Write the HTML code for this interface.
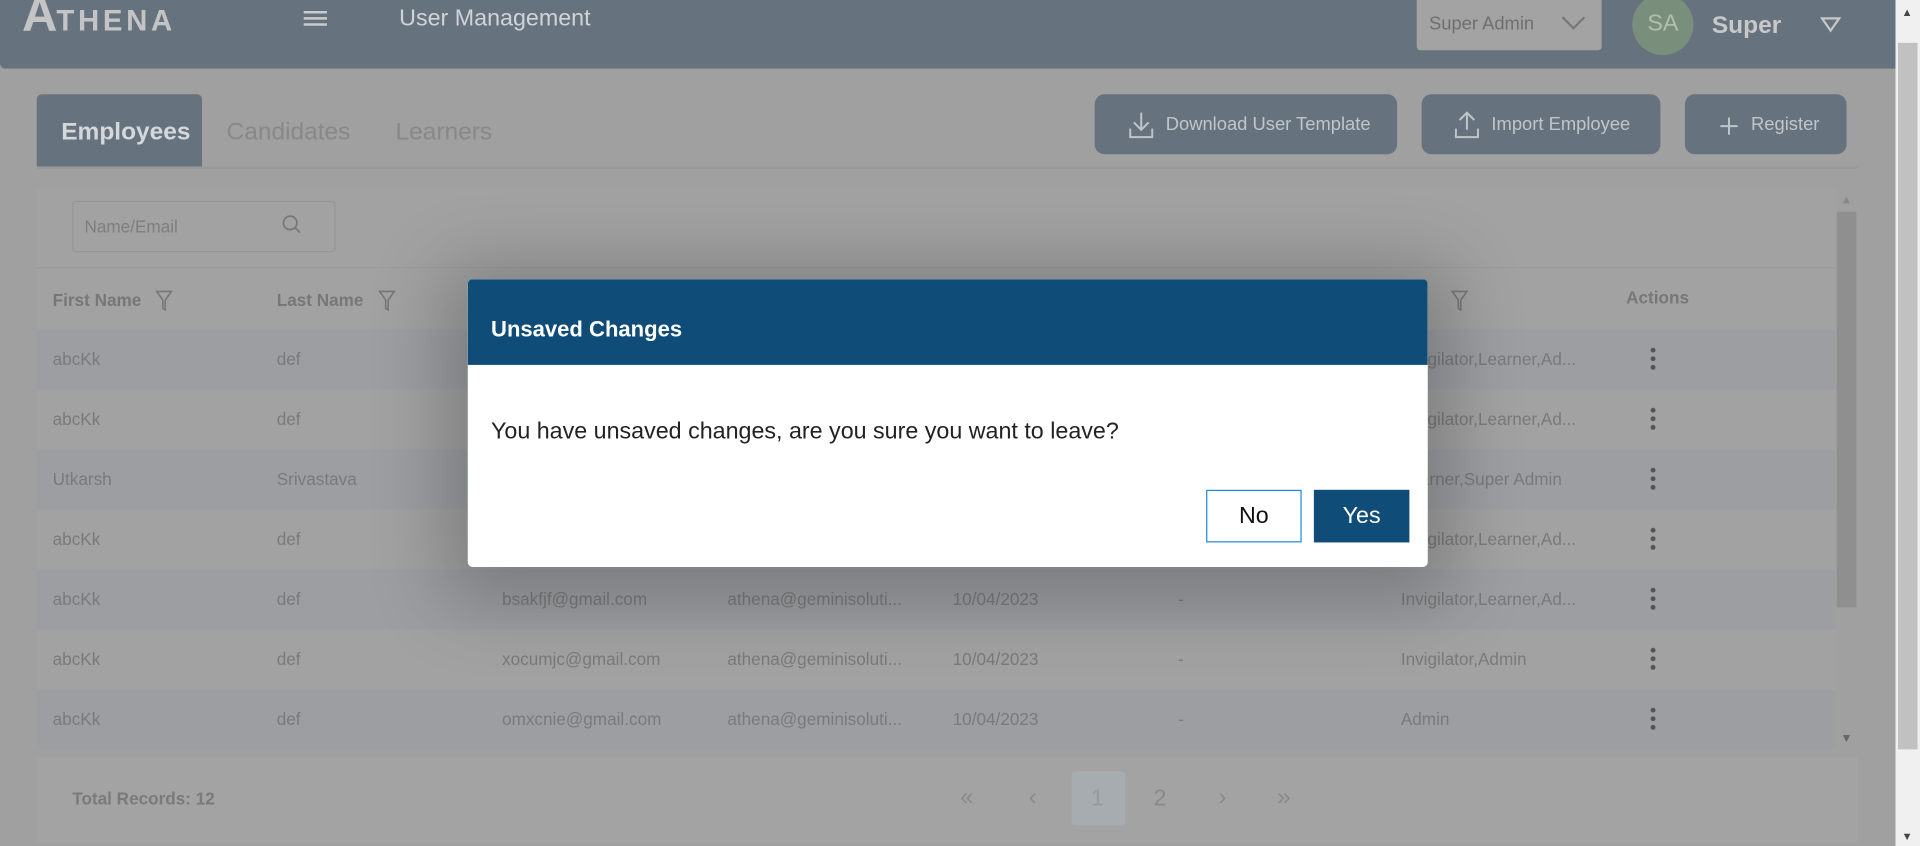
<!DOCTYPE html>
<html><head><meta charset="utf-8"><style>
html,body{margin:0;padding:0;width:1920px;height:846px;overflow:hidden;background:#a0a0a0;font-family:"Liberation Sans",sans-serif}
#w{position:absolute;left:0;top:0;width:1568px;height:691px;transform:scale(1.22449);transform-origin:0 0;background:#a0a0a0}
.a{position:absolute;white-space:nowrap}
.hdr{left:0;top:0;width:1548px;height:56px;background:#66737f;border-bottom-left-radius:4px}
.btn{top:77px;height:49px;background:#66737f;border-radius:8px;color:#c0c5c9;font-size:15px;line-height:49px}
.row{left:30px;width:1469px;height:49px}
.c{font-size:14px;color:#7a7a7a;line-height:49px}
.dots{width:4px;height:4px;border-radius:2px;background:#555;position:absolute;left:1348px}
</style></head><body><div id="w">
<div class="a hdr"></div>
<div class="a" style="left:18px;top:-10px;font-size:40px;font-weight:bold;color:#c4c4c4">A</div>
<div class="a" style="left:46px;top:4px;font-size:24px;font-weight:bold;color:#c4c4c4;letter-spacing:3px">THENA</div>
<div class="a" style="left:248px;top:9px;width:19px;height:2px;background:#ccc;box-shadow:0 5px 0 #ccc,0 10px 0 #ccc"></div>
<div class="a" style="left:326px;top:5px;font-size:19px;color:#d0d4d8">User Management</div>
<div class="a" style="left:1157px;top:0;width:151px;height:41px;background:#a3a3a3;border-radius:0 0 3px 3px"></div>
<div class="a" style="left:1167px;top:11px;font-size:15px;color:#6f6f6f">Super Admin</div>
<svg class="a" style="left:1275px;top:13px" width="20" height="12"><path d="M1 1l9 9 9-9" fill="none" stroke="#777" stroke-width="1.8"/></svg>
<div class="a" style="left:1333px;top:-5px;width:50px;height:50px;border-radius:25px;background:#7a8e7c;color:#b0c0b0;font-size:19px;text-align:center;line-height:50px">SA</div>
<div class="a" style="left:1398px;top:10px;font-size:20px;font-weight:bold;color:#c8c8c8">Super</div>
<svg class="a" style="left:1486px;top:13px" width="18" height="14"><path d="M2 2h14l-7 10z" fill="none" stroke="#c8c8c8" stroke-width="1.8"/></svg>

<div class="a" style="left:30px;top:77px;width:135px;height:59px;background:#66737f;border-radius:4px 4px 0 0"></div>
<div class="a" style="left:50px;top:97px;font-size:20px;font-weight:bold;color:#d5d8db">Employees</div>
<div class="a" style="left:185px;top:97px;font-size:20px;color:#888">Candidates</div>
<div class="a" style="left:323px;top:97px;font-size:20px;color:#888">Learners</div>
<div class="a" style="left:30px;top:136px;width:1487px;height:2px;background:#9a9a9a"></div>

<div class="a btn" style="left:894px;width:247px"><svg class="a" style="left:28px;top:14px" width="20" height="22"><path d="M10 1v14M4 9l6 6 6-6M1 14v7h18v-7" fill="none" stroke="#c0c5c9" stroke-width="1.6"/></svg><span class="a" style="left:58px">Download User Template</span></div>
<div class="a btn" style="left:1161px;width:195px"><svg class="a" style="left:27px;top:13px" width="20" height="23"><path d="M10 16V2M4 8l6-6 6 6M1 15v7h18v-7" fill="none" stroke="#c0c5c9" stroke-width="1.6"/></svg><span class="a" style="left:57px">Import Employee</span></div>
<div class="a btn" style="left:1376px;width:132px"><svg class="a" style="left:28px;top:18px" width="16" height="16"><path d="M8 1v14M1 8h14" fill="none" stroke="#c0c5c9" stroke-width="1.6"/></svg><span class="a" style="left:54px">Register</span></div>

<div class="a" style="left:30px;top:154px;width:1469px;height:458px;background:#a2a2a2"></div>
<div class="a" style="left:59px;top:164px;width:215px;height:42px;border:1px solid #959595;border-radius:3px;box-sizing:border-box"></div>
<div class="a" style="left:69px;top:177px;font-size:14px;color:#7e7e7e">Name/Email</div>
<svg class="a" style="left:230px;top:175px" width="16" height="16"><circle cx="7" cy="7" r="5.5" fill="none" stroke="#777" stroke-width="1.4"/><path d="M11 11l4 4" stroke="#777" stroke-width="1.4"/></svg>
<div class="a" style="left:30px;top:218px;width:1469px;height:1px;background:#9a9a9a"></div>

<div class="a c" style="left:43px;top:221px;font-weight:bold;color:#777">First Name</div>
<div class="a c" style="left:226px;top:221px;font-weight:bold;color:#777">Last Name</div>
<div class="a c" style="left:1328px;top:219px;font-weight:bold;color:#777">Actions</div>
<svg class="a" style="left:127px;top:237px" width="14" height="17"><path d="M1 1h12l-5 7v8l-2-1V8z" fill="none" stroke="#777" stroke-width="1.3"/></svg>
<svg class="a" style="left:309px;top:237px" width="14" height="17"><path d="M1 1h12l-5 7v8l-2-1V8z" fill="none" stroke="#777" stroke-width="1.3"/></svg>
<svg class="a" style="left:1185px;top:237px" width="14" height="17"><path d="M1 1h12l-5 7v8l-2-1V8z" fill="none" stroke="#777" stroke-width="1.3"/></svg>

<div class="a row" style="top:269px;background:#9c9ea1"></div>
<div class="a row" style="top:367px;background:#9c9ea1"></div>
<div class="a row" style="top:465px;background:#9c9ea1"></div>
<div class="a row" style="top:563px;background:#9c9ea1"></div>

<div class="a c" style="left:43px;top:269px">abcKk</div><div class="a c" style="left:226px;top:269px">def</div><div class="a c" style="left:1144px;top:269px">Invigilator,Learner,Ad...</div>
<div class="a c" style="left:43px;top:318px">abcKk</div><div class="a c" style="left:226px;top:318px">def</div><div class="a c" style="left:1144px;top:318px">Invigilator,Learner,Ad...</div>
<div class="a c" style="left:43px;top:367px">Utkarsh</div><div class="a c" style="left:226px;top:367px">Srivastava</div><div class="a c" style="left:1144px;top:367px">Learner,Super Admin</div>
<div class="a c" style="left:43px;top:416px">abcKk</div><div class="a c" style="left:226px;top:416px">def</div><div class="a c" style="left:1144px;top:416px">Invigilator,Learner,Ad...</div>
<div class="a c" style="left:43px;top:465px">abcKk</div><div class="a c" style="left:226px;top:465px">def</div><div class="a c" style="left:410px;top:465px">bsakfjf@gmail.com</div><div class="a c" style="left:594px;top:465px">athena@geminisoluti...</div><div class="a c" style="left:778px;top:465px">10/04/2023</div><div class="a c" style="left:962px;top:465px">-</div><div class="a c" style="left:1144px;top:465px">Invigilator,Learner,Ad...</div>
<div class="a c" style="left:43px;top:514px">abcKk</div><div class="a c" style="left:226px;top:514px">def</div><div class="a c" style="left:410px;top:514px">xocumjc@gmail.com</div><div class="a c" style="left:594px;top:514px">athena@geminisoluti...</div><div class="a c" style="left:778px;top:514px">10/04/2023</div><div class="a c" style="left:962px;top:514px">-</div><div class="a c" style="left:1144px;top:514px">Invigilator,Admin</div>
<div class="a c" style="left:43px;top:563px">abcKk</div><div class="a c" style="left:226px;top:563px">def</div><div class="a c" style="left:410px;top:563px">omxcnie@gmail.com</div><div class="a c" style="left:594px;top:563px">athena@geminisoluti...</div><div class="a c" style="left:778px;top:563px">10/04/2023</div><div class="a c" style="left:962px;top:563px">-</div><div class="a c" style="left:1144px;top:563px">Admin</div>

<div class="dots" style="top:284px;box-shadow:0 7px 0 #555,0 14px 0 #555"></div>
<div class="dots" style="top:333px;box-shadow:0 7px 0 #555,0 14px 0 #555"></div>
<div class="dots" style="top:382px;box-shadow:0 7px 0 #555,0 14px 0 #555"></div>
<div class="dots" style="top:431px;box-shadow:0 7px 0 #555,0 14px 0 #555"></div>
<div class="dots" style="top:480px;box-shadow:0 7px 0 #555,0 14px 0 #555"></div>
<div class="dots" style="top:529px;box-shadow:0 7px 0 #555,0 14px 0 #555"></div>
<div class="dots" style="top:578px;box-shadow:0 7px 0 #555,0 14px 0 #555"></div>

<div class="a" style="left:1499px;top:155px;width:18px;height:457px;background:#a0a0a0"></div>
<div class="a" style="left:1500px;top:173px;width:16px;height:323px;background:#8f8f8f"></div>
<div class="a" style="left:1503px;top:158px;font-size:10px;color:#888">▲</div>
<div class="a" style="left:1503px;top:598px;font-size:10px;color:#666">▼</div>

<div class="a" style="left:30px;top:618px;width:1487px;height:70px;background:#a3a3a3"></div>
<div class="a" style="left:59px;top:644px;font-size:14px;font-weight:bold;color:#7a7a7a">Total Records: 12</div>
<div class="a" style="left:875px;top:630px;width:44px;height:44px;background:#a7acb1;border-radius:3px"></div>
<div class="a" style="left:784px;top:640px;font-size:20px;color:#8a8a8a">«</div>
<div class="a" style="left:840px;top:640px;font-size:20px;color:#8a8a8a">‹</div>
<div class="a" style="left:891px;top:642px;font-size:19px;color:#999">1</div>
<div class="a" style="left:942px;top:642px;font-size:19px;color:#8a8a8a">2</div>
<div class="a" style="left:995px;top:640px;font-size:20px;color:#8a8a8a">›</div>
<div class="a" style="left:1043px;top:640px;font-size:20px;color:#8a8a8a">»</div>

<div class="a" style="left:1548px;top:0;width:20px;height:691px;background:#f0f0f0"></div>
<div class="a" style="left:1550px;top:35px;width:16px;height:577px;background:#c1c1c1"></div>
<div class="a" style="left:1553px;top:5px;font-size:9px;color:#444">▲</div>
<div class="a" style="left:1553px;top:678px;font-size:9px;color:#444">▼</div>

<div class="a" style="left:382px;top:228px;width:784px;height:235px;background:#fff;border-radius:4px;box-shadow:0 10px 60px 20px rgba(0,0,0,0.22);overflow:hidden">
 <div class="a" style="left:0;top:0;width:784px;height:70px;background:#0f4c78"></div>
 <div class="a" style="left:19px;top:31px;font-size:18px;font-weight:bold;color:#fff">Unsaved Changes</div>
 <div class="a" style="left:19px;top:114px;font-size:19px;color:#222">You have unsaved changes, are you sure you want to leave?</div>
 <div class="a" style="left:603px;top:172px;width:78px;height:43px;border:1px solid #1e88e5;box-sizing:border-box;font-size:19px;color:#111;text-align:center;line-height:41px">No</div>
 <div class="a" style="left:691px;top:172px;width:78px;height:43px;background:#0f4c78;font-size:19px;color:#fff;text-align:center;line-height:43px">Yes</div>
</div>
</div></body></html>
